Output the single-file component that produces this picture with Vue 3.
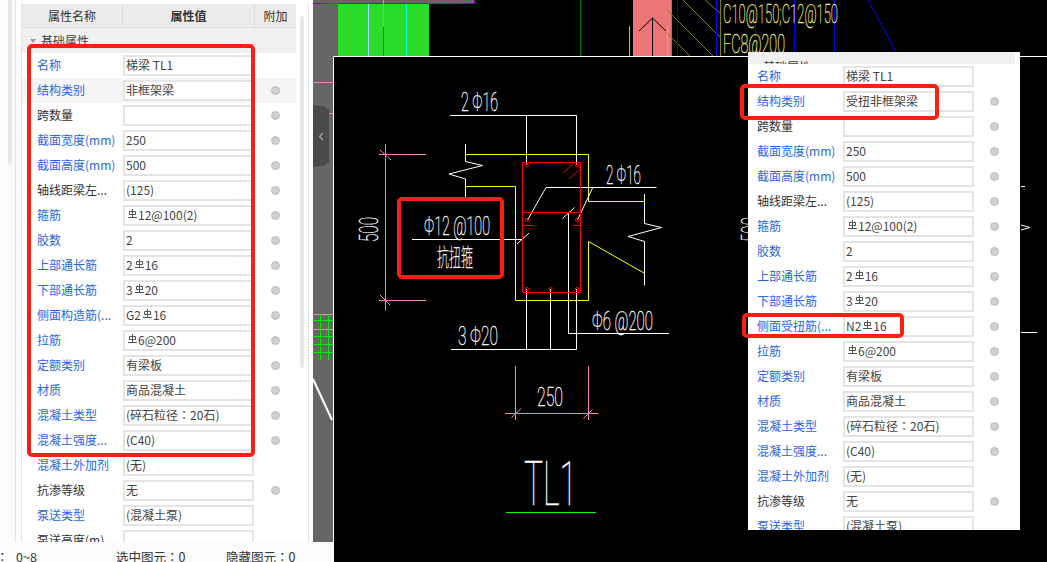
<script setup>
const baseRows = [
  { label: '名称', value: '梯梁 TL1', blue: true, noDot: true },
  { label: '结构类别', value: '非框架梁', blue: true, hover: true },
  { label: '跨数量', value: '' },
  { label: '截面宽度(mm)', value: '250', blue: true },
  { label: '截面高度(mm)', value: '500', blue: true },
  { label: '轴线距梁左...', value: '(125)' },
  { label: '箍筋', value: '#12@100(2)', blue: true },
  { label: '胶数', value: '2', blue: true },
  { label: '上部通长筋', value: '2#16', blue: true },
  { label: '下部通长筋', value: '3#20', blue: true },
  { label: '侧面构造筋(...', value: 'G2#16', blue: true },
  { label: '拉筋', value: '#6@200', blue: true },
  { label: '定额类别', value: '有梁板', blue: true },
  { label: '材质', value: '商品混凝土', blue: true },
  { label: '混凝土类型', value: '(碎石粒径：20石)', blue: true },
  { label: '混凝土强度...', value: '(C40)', blue: true },
  { label: '混凝土外加剂', value: '(无)', blue: true, noDot: true },
  { label: '抗渗等级', value: '无' },
  { label: '泵送类型', value: '(混凝土泵)', blue: true, noDot: true },
]

const leftRows = [...baseRows, { label: '泵送高度(m)', value: '', noDot: true }]

const rightRows = baseRows.map((r) => {
  if (r.label === '结构类别') return { ...r, value: '受扭非框架梁', hover: false }
  if (r.label === '侧面构造筋(...') return { ...r, label: '侧面受扭筋(...', value: 'N2#16' }
  return r
})

// '#' in a value marks the rebar grade symbol, '：' gets the centred TC form
function parts(value) {
  return value.split(/(#|：)/).filter(Boolean)
}

const stripLines = [
  { c: '#ff80c0', d: 'M313 82.5H333M313 113.5H333M313 314.5H333M313 329.5H333' },
  { c: '#00f000', d: 'M313 320.5H333M313 336.5H333M313 344.5H333M313 352.5H333M320.5 314V360M328.5 314V360' },
  { c: '#ffffff', w: 2, d: 'M313 379L332 420' },
  { c: '#a000a0', d: 'M313 3.5H333' },
]

const topLines = [
  { c: '#a000a0', d: 'M333 3.5H474.5V0' },
  { c: '#9fe0ff', d: 'M368.5 4V56' },
  { c: '#00ffff', d: 'M406.5 4V56M629.5 26V56M667.5 26V56' },
  { c: '#a0a0a0', d: 'M383.5 0V27' },
  { c: '#e02000', d: 'M383.5 27V56' },
  { c: '#008000', d: 'M580.5 0V56' },
  { c: '#000000', d: 'M652.5 18V56M639 31L652.5 18L666 31' },
  { c: '#b08000', d: 'M671.5 0V56' },
  { c: '#808000', d: 'M720.5 0V56M667 10L713 56M683 0L720 37M705 0L720 13M667 33L690 56' },
  { c: '#0000ff', d: 'M677.5 0V56M716.5 0V56M755.5 0V56M794.5 0V56M834.5 0V56M868 0L898 56' },
]

const cadLines = [
  { c: '#ffff00', d: 'M465.5 154.5H588.5V201.5H644M588.5 241.5L644 273M588.5 241.5V300.5H515.5V186.5H465.5' },
  { c: '#ffffff', d: 'M450 115.5H576.5M526.5 115.5V165M576.5 115.5V165M465.5 144V161.5L482.5 165.5L449 174L465.5 179V197M644.5 194V223.5L661.5 227.5L628 236.5L644.5 241.5V285.5M546 187.5H656.5M546 187.5L527.5 220M592.5 188L577.5 220M562.5 218.5L574.5 207.5M568.5 213.5V333.5H669M526.5 289V349.5M550.5 289V349.5M576.5 289V349.5M451 349.5H576.5M412 239.5H523M517 244L529 233' },
  { c: '#ff0000', d: 'M522.5 162.5H580.5V292.5H522.5ZM522.5 212.5H580.5M523 225.5H533M573 225.5H581M563 173L574 163M569 179L580 169' },
  { c: '#ff80c0', d: 'M385.5 144V310.5M379 154.5H426M379 300.5H426M380 150L391 160M380 295L390 305M515.5 366V420M588.5 366V420M505 413.5H598.5M511.5 417.5L521 408.5M583.5 418.5L592.5 409.5' },
  { c: '#00ff00', d: 'M506 512.5H596' },
  { c: '#ffffff', d: 'M1021 186.5H1025M1021 332.5H1037M1021 225L1030 227.5L1021 230' },
]

const bars = [
  [527, 165.5], [577, 165.5], [527, 220], [577, 220], [527, 289], [550.5, 289], [577, 289],
]

const cadTexts = [
  { t: '2 Φ16', x: 461, y: 111, w: 37, s: 25 },
  { t: '2 Φ16', x: 606, y: 184, w: 35, s: 25 },
  { t: 'Φ12 @100', x: 424, y: 235, w: 66, s: 25 },
  { t: '抗扭箍', x: 437, y: 266, w: 36, s: 24 },
  { t: 'Φ6 @200', x: 592, y: 330, w: 61, s: 25 },
  { t: '3 Φ20', x: 458, y: 345, w: 40, s: 25 },
  { t: '250', x: 537, y: 406, w: 26, s: 25 },
  { t: 'TL1', x: 524, y: 505, w: 53, s: 62 },
  { t: 'C10@150;C12@150', x: 723, y: 23, w: 115, s: 26, c: '#f4f47c' },
  { t: 'FC8@200', x: 723, y: 53, w: 62, s: 26, c: '#f4f47c' },
]
</script>

<template>
  <div class="screen">
    <div class="left-col">
      <div class="left-top">
        <aside class="sidebar">
          <div class="rail"><span class="rail-thumb"></span></div>
          <section class="sheet sheet-left">
            <header class="sheet-head">
              <span>属性名称</span>
              <span class="head-value">属性值</span>
              <span>附加</span>
            </header>
            <div class="section-row"><i class="caret"></i>基础属性</div>
            <div v-for="row in leftRows" :key="row.label" class="row" :class="{ hover: row.hover }">
              <span class="label" :class="{ blue: row.blue }">{{ row.label }}</span>
              <span class="val">
                <template v-for="(p, i) in parts(row.value)" :key="i">
                  <svg v-if="p === '#'" class="rebar" width="9" height="9" viewBox="0 0 9 9"><path d="M4.5 0V8M1.5 2.5H7.5V5.5H1.5ZM0 8.5H9" fill="none" stroke="#555" /></svg>
                  <span v-else-if="p === '：'" class="colon">：</span>
                  <template v-else>{{ p }}</template>
                </template>
              </span>
              <span class="dot-cell"><i v-if="!row.noDot" class="dot"></i></span>
            </div>
            <span class="scroll-thumb"></span>
          </section>
        </aside>
        <svg class="strip" width="20" height="542" viewBox="313 0 20 542">
          <rect x="313" y="0" width="20" height="542" fill="#666" />
          <path v-for="l in stripLines" :key="l.d" :d="l.d" :stroke="l.c" :stroke-width="l.w || 1" fill="none" />
          <path d="M313 105L325 107L329 110V162L325 165L313 167Z" fill="#4a4a4a" />
          <path d="M323 133L319.5 136.5L323 140" stroke="#aaa" stroke-width="1.2" fill="none" />
        </svg>
      </div>
      <footer class="status">
        <span class="st-colon colon">：</span>
        <span class="st-range">0~8</span>
        <span class="st-picked">选中图元<span class="colon">：</span>0</span>
        <span>隐藏图元<span class="colon">：</span>0</span>
      </footer>
    </div>

    <svg class="cad" width="714" height="562" viewBox="333 0 714 562">
      <rect x="333" y="0" width="5" height="56" fill="#666" />
      <rect x="338" y="4" width="91" height="52" fill="#2bdc2b" />
      <rect x="333" y="0" width="141" height="3" fill="#666" />
      <rect x="633" y="0" width="38" height="56" fill="#ec7575" />
      <path v-for="l in topLines" :key="l.d" :d="l.d" :stroke="l.c" fill="none" />
      <path d="M333.5 562V56.5H1047" stroke="#fff" fill="none" />
      <path v-for="l in cadLines" :key="l.d" :d="l.d" :stroke="l.c" fill="none" />
      <circle v-for="b in bars" :key="b.join()" :cx="b[0]" :cy="b[1]" r="1.6" fill="none" stroke="#ff0000" />
      <text
        v-for="t in cadTexts"
        :key="t.t + t.x"
        class="cad-text"
        :x="t.x"
        :y="t.y"
        :font-size="t.s"
        :fill="t.c || '#fff'"
        :stroke="t.c || '#fff'"
        :textLength="t.w"
        lengthAdjust="spacingAndGlyphs"
      >{{ t.t }}</text>
      <text class="cad-text" transform="translate(378,242) rotate(-90)" font-size="25" fill="#fff" stroke="#fff" textLength="25" lengthAdjust="spacingAndGlyphs">500</text>
      <text class="cad-text" transform="translate(760,242) rotate(-90)" font-size="25" fill="#fff" stroke="#fff" textLength="25" lengthAdjust="spacingAndGlyphs">500</text>
    </svg>

    <section class="sheet sheet-right">
      <div class="section-row section-cut"><span>基础属性</span></div>
      <div v-for="row in rightRows" :key="row.label" class="row">
        <span class="label" :class="{ blue: row.blue }">{{ row.label }}</span>
        <span class="val">
          <template v-for="(p, i) in parts(row.value)" :key="i">
            <svg v-if="p === '#'" class="rebar" width="9" height="9" viewBox="0 0 9 9"><path d="M4.5 0V8M1.5 2.5H7.5V5.5H1.5ZM0 8.5H9" fill="none" stroke="#555" /></svg>
            <span v-else-if="p === '：'" class="colon">：</span>
            <template v-else>{{ p }}</template>
          </template>
        </span>
        <span class="dot-cell"><i v-if="!row.noDot" class="dot"></i></span>
      </div>
    </section>

    <div class="mark mark-a"></div>
    <div class="mark mark-b"></div>
    <div class="mark mark-c"></div>
    <div class="mark mark-d"></div>
  </div>
</template>

<style scoped>
.screen {
  position: relative;
  display: flex;
  width: 1047px;
  height: 562px;
  overflow: hidden;
  background: #000;
  font-family: "Noto Sans CJK SC", "Liberation Sans", sans-serif;
  font-size: 12px;
  color: #333;
}

.colon {
  font-family: "Noto Sans CJK TC", sans-serif;
}

.left-col {
  display: flex;
  flex-direction: column;
  width: 333px;
  flex: none;
}

.left-top {
  display: flex;
  height: 542px;
}

.sidebar {
  display: flex;
  width: 313px;
  flex: none;
  background: #fff;
}

.rail {
  width: 16px;
  flex: none;
  margin-right: 5px;
  border-right: 1px solid #e2e2e2;
  box-sizing: border-box;
  padding: 0 4px 0 8px;
  background: #fbfbfb;
}

.rail-thumb {
  display: block;
  width: 4px;
  height: 165px;
  border-radius: 0 0 2px 2px;
  background: #e8e8e8;
}

.sheet {
  position: relative;
  overflow: hidden;
  background: #fff;
}

.sheet-left {
  width: 288px;
  flex: none;
  margin-top: 3px;
  padding-top: 1px;
  box-sizing: border-box;
  border-left: 1px solid #e2e2e2;
  border-right: 1px solid #e2e2e2;
  --label-w: 86px;
  --label-pad: 15px;
  --row-w: 274px;
}

.sheet-right {
  position: absolute;
  left: 748px;
  top: 52px;
  width: 272px;
  height: 478px;
  --label-w: 86px;
  --label-pad: 9px;
  --row-w: 267px;
}

.sheet-head {
  display: grid;
  grid-template-columns: 100px 132px 42px;
  width: 274px;
  height: 24px;
  box-sizing: border-box;
  border-bottom: 1px solid #ddd;
  background: #ebebeb;
  line-height: 23px;
  text-align: center;
}

.sheet-head span + span {
  border-left: 1px solid #ddd;
}

.head-value {
  font-weight: 700;
}

.section-row {
  display: flex;
  align-items: center;
  gap: 5px;
  width: 274px;
  height: 25px;
  padding-left: 8px;
  box-sizing: border-box;
  background: #f0f0f0;
  color: #444;
}

.caret {
  width: 0;
  height: 0;
  border: 3px solid transparent;
  border-top: 4px solid #999;
  border-bottom: 0;
}

.section-cut {
  width: 267px;
  height: 12px;
  padding-left: 15px;
  align-items: flex-end;
  overflow: hidden;
}

.section-cut span {
  margin-bottom: -11px;
}

.row {
  display: grid;
  grid-template-columns: var(--label-w) 131px 1fr;
  align-items: center;
  width: var(--row-w);
  height: 25px;
  padding-left: var(--label-pad);
  box-sizing: border-box;
}

.row.hover {
  background: #f5f5f5;
}

.label {
  white-space: nowrap;
  line-height: 19px;
  padding-bottom: 2px;
}

.label.blue {
  color: #2a66e0;
}

.val {
  display: block;
  height: 21px;
  box-sizing: border-box;
  border: 2px solid #e4e4e4;
  background: #fff;
  padding-left: 1px;
  line-height: 15px;
  white-space: nowrap;
  color: #444;
}

.rebar {
  margin: 0 1px 0 2px;
  vertical-align: 2px;
}

.dot-cell {
  display: flex;
  justify-content: center;
  padding-bottom: 1px;
}

.dot {
  width: 9px;
  height: 9px;
  box-sizing: border-box;
  border-radius: 50%;
  background: #d0d0d0;
  border: 1px solid #bdbdbd;
}

.scroll-thumb {
  position: absolute;
  left: 278px;
  top: 13px;
  width: 4px;
  height: 352px;
  border-radius: 2px;
  background: #e8e8e8;
}

.strip {
  display: block;
  flex: none;
}

.status {
  display: flex;
  height: 20px;
  box-sizing: border-box;
  padding: 6px 0 0 0;
  background: #fbfbfb;
  line-height: 17px;
  font-size: 12.5px;
  white-space: nowrap;
  overflow: hidden;
}

.st-colon {
  width: 16px;
  margin-left: -4px;
  margin-right: 4px;
}

.st-range {
  width: 100px;
}

.st-picked {
  width: 110px;
}

.cad {
  display: block;
  flex: none;
}

.cad-text {
  font-family: Roboto, "Noto Sans CJK SC", sans-serif;
  font-weight: 100;
  stroke-width: 0.35px;
}

.mark {
  position: absolute;
  box-sizing: border-box;
  border: 4px solid #ff1e14;
  border-radius: 5px;
}

.mark-a {
  left: 27px;
  top: 44px;
  width: 228px;
  height: 413px;
}

.mark-b {
  left: 397px;
  top: 197px;
  width: 107px;
  height: 82px;
}

.mark-c {
  left: 740px;
  top: 84px;
  width: 199px;
  height: 36px;
}

.mark-d {
  left: 742px;
  top: 313px;
  width: 162px;
  height: 25px;
}
</style>
